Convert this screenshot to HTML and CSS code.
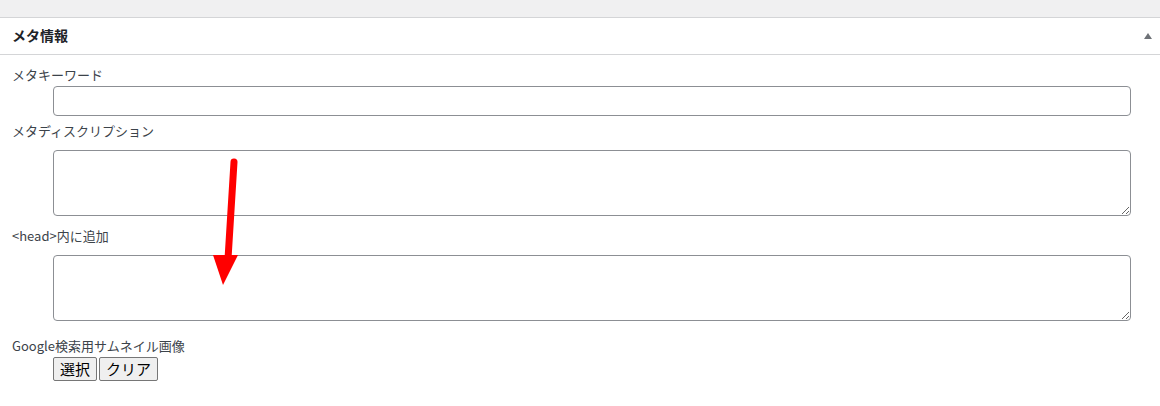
FILE: index.html
```html
<!DOCTYPE html>
<html lang="ja">
<head>
    <meta charset="UTF-8">
    <meta name="viewport" content="width=device-width, initial-scale=1.0">
    <title>メタ情報</title>
    <link rel="stylesheet" href="styles.css">
</head>
<body>
    <div class="topbar"></div>

    <div class="postbox">
        <div class="postbox-header">
            <h2>メタ情報</h2>
            <span class="toggle"></span>
        </div>

        <div class="inside">
            <div class="field">
                <label for="meta-keywords">メタキーワード</label>
                <input type="text" id="meta-keywords" class="text-input">
            </div>

            <div class="field field-area">
                <label for="meta-description">メタディスクリプション</label>
                <textarea id="meta-description" class="area-input"></textarea>
            </div>

            <div class="field field-area">
                <label for="meta-head">&lt;head&gt;内に追加</label>
                <textarea id="meta-head" class="area-input"></textarea>
            </div>

            <div class="field field-thumb">
                <label>Google検索用サムネイル画像</label>
                <div class="thumb-buttons">
                    <button type="button">選択</button>
                    <button type="button">クリア</button>
                </div>
            </div>
        </div>

        <!-- annotation arrow -->
        <svg class="arrow" width="60" height="140" viewBox="0 0 60 140">
            <line x1="34" y1="13" x2="28" y2="110" stroke="#ff0000" stroke-width="7" stroke-linecap="round"/>
            <polygon points="13,106 38,106 23,136" fill="#ff0000"/>
        </svg>
    </div>
</body>
</html>
```

FILE: styles.css
```css
body {
    font-family: "Noto Sans CJK JP", "Noto Sans", sans-serif;
    margin: 0;
    background-color: #fff;
    color: #3c434a;
}

.topbar {
    height: 17px;
    background-color: #f0f0f1;
    border-bottom: 1px solid #d4d5d7;
}

.postbox {
    position: relative;
}

.postbox-header {
    display: flex;
    align-items: center;
    justify-content: space-between;
    box-sizing: border-box;
    height: 37px;
    padding: 0 8px 3px 12px;
    border-bottom: 1px solid #d4d5d7;
}

.postbox-header h2 {
    margin: 0;
    font-size: 14px;
    font-weight: bold;
    color: #1d2327;
}

.toggle {
    width: 0;
    height: 0;
    border-left: 4px solid transparent;
    border-right: 4px solid transparent;
    border-bottom: 6px solid #6e7277;
    margin-top: 2px;
}

.inside {
    padding: 12px 29px 0 12px;
}

.field label {
    display: block;
    font-size: 13px;
    line-height: 16px;
    padding-bottom: 2px;
    color: #3c434a;
}

.text-input,
.area-input {
    display: block;
    box-sizing: border-box;
    width: calc(100% - 41px);
    margin-left: 41px;
    border: 1px solid #8c8f94;
    border-radius: 4px;
    background-color: #fff;
    font-family: inherit;
}

.text-input {
    height: 30px;
    margin-top: 1px;
    margin-bottom: 7px;
}

.area-input {
    height: 66px;
    margin-top: 9px;
    margin-bottom: 12px;
    resize: vertical;
}

.field-thumb {
    margin-top: 17px;
}

.thumb-buttons {
    display: flex;
    gap: 2px;
    margin-left: 41px;
    margin-top: 1px;
}

.thumb-buttons button {
    font-family: "Noto Sans CJK JP", sans-serif;
    font-size: 15px;
    line-height: 20px;
    height: 24px;
    padding: 1px 6px;
    color: #000;
    background-color: #efefef;
    border: 1px solid #767676;
    border-radius: 2px;
}

.arrow {
    position: absolute;
    left: 200px;
    top: 131px;
}
```
